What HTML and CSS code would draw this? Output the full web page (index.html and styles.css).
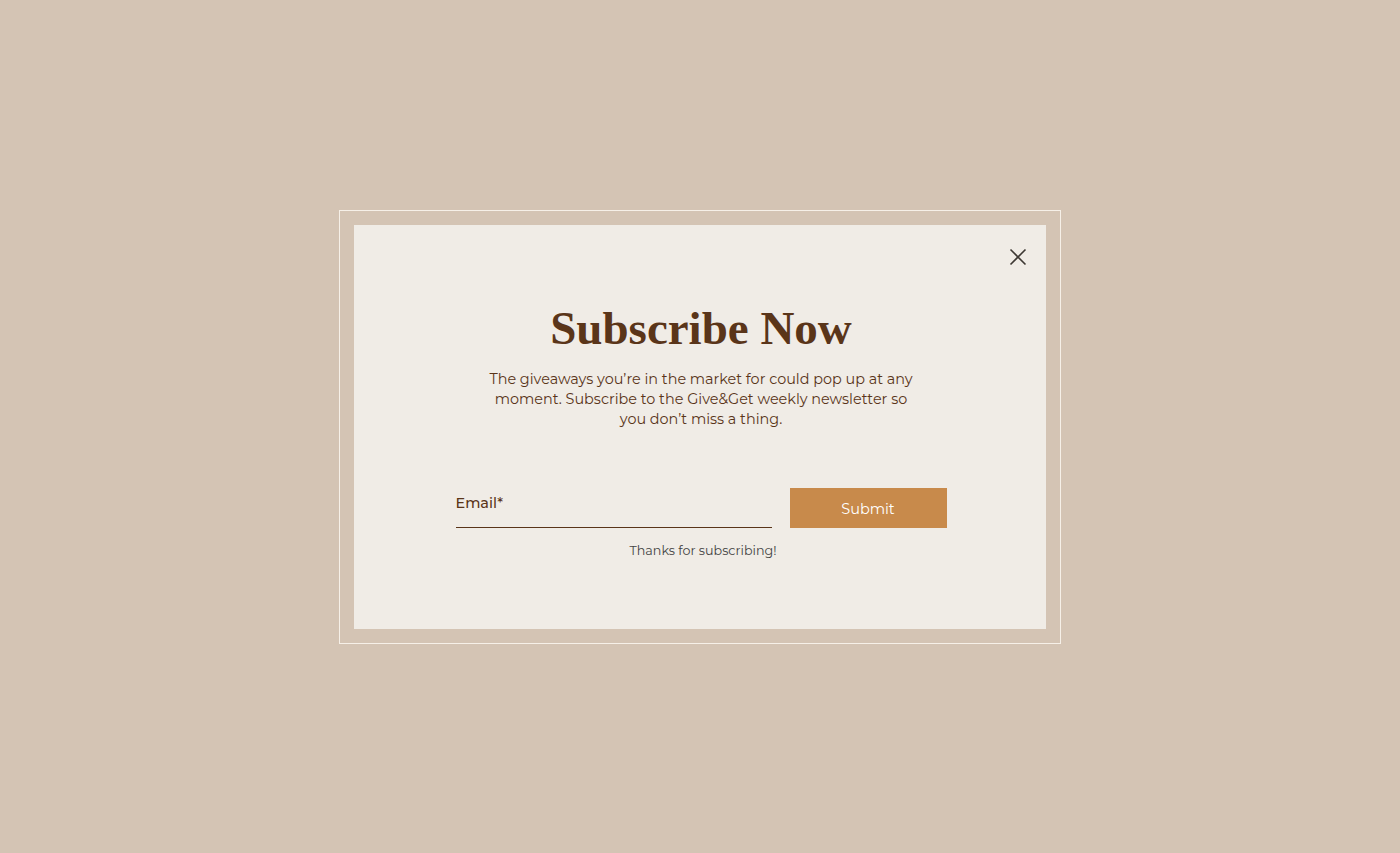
FILE: index.html
```html
<!DOCTYPE html>
<html lang="en">
<head>
<meta charset="utf-8">
<title>Subscribe Now</title>
<link rel="stylesheet" href="styles.css">
</head>
<body>
<div class="page">
  <div class="frame">
    <div class="panel">
      <button class="close" aria-label="Close">
        <svg width="18" height="18" viewBox="0 0 18 18"><path d="M1.5 1.5 L16.5 16.5 M16.5 1.5 L1.5 16.5" stroke="#3d3833" stroke-width="1.6" fill="none"/></svg>
      </button>
      <h1 class="title">Subscribe Now</h1>
      <p class="desc">The giveaways you’re in the market for could pop up at any moment. Subscribe to the Give&amp;Get weekly newsletter so you don’t miss a thing.</p>
      <form class="form">
        <div class="row">
          <label class="field">
            <span class="label">Email*</span>
          </label>
          <button type="button" class="submit">Submit</button>
        </div>
        <div class="thanks">Thanks for subscribing!</div>
      </form>
    </div>
  </div>
</div>
</body>
</html>
```

FILE: styles.css
```css
html, body {
  margin: 0;
  padding: 0;
  height: 100%;
}
body {
  background: #d4c4b4;
  font-family: "Montserrat", "Open Sans", "DejaVu Sans", sans-serif;
}
.page {
  height: 100%;
  display: flex;
  align-items: center;
  justify-content: center;
}
.frame {
  width: 692px;
  height: 404px;
  border: 1px solid #f6f0e8;
  padding: 14px;
  box-sizing: content-box;
  display: flex;
}
.panel {
  position: relative;
  flex: 1;
  background: #f0ece6;
  display: flex;
  flex-direction: column;
  align-items: center;
}
.close {
  position: absolute;
  top: 23px;
  right: 19px;
  width: 18px;
  height: 18px;
  padding: 0;
  border: 0;
  background: none;
  display: flex;
}
.title {
  margin: 75px 0 0 2px;
  font-family: "Liberation Serif", "Times New Roman", serif;
  font-weight: bold;
  font-size: 47px;
  line-height: 56px;
  color: #5a3519;
  letter-spacing: 0;
}
.desc {
  margin: 13px 0 0 2px;
  width: 432px;
  text-align: center;
  font-size: 14.4px;
  line-height: 20px;
  color: #5a3519;
}
.form {
  margin: 59px 0 0 2px;
  width: 491px;
  display: flex;
  flex-direction: column;
  align-items: center;
}
.row {
  display: flex;
  width: 100%;
  gap: 18px;
}
.field {
  flex: 0 0 316px;
  height: 39px;
  border-bottom: 1px solid #5a3519;
  display: flex;
  align-items: center;
}
.label {
  font-size: 14.4px;
  color: #5a3519;
  font-weight: 500;
  margin-top: -8px;
}
.submit {
  width: 157px;
  height: 40px;
  padding: 2px 0 0;
  border: 0;
  background: #c88a4b;
  color: #ffffff;
  font-family: inherit;
  font-size: 14.5px;
}
.thanks {
  margin-top: 14px;
  font-size: 12.7px;
  line-height: 17px;
  color: #444;
  padding-left: 4px;
}
```
